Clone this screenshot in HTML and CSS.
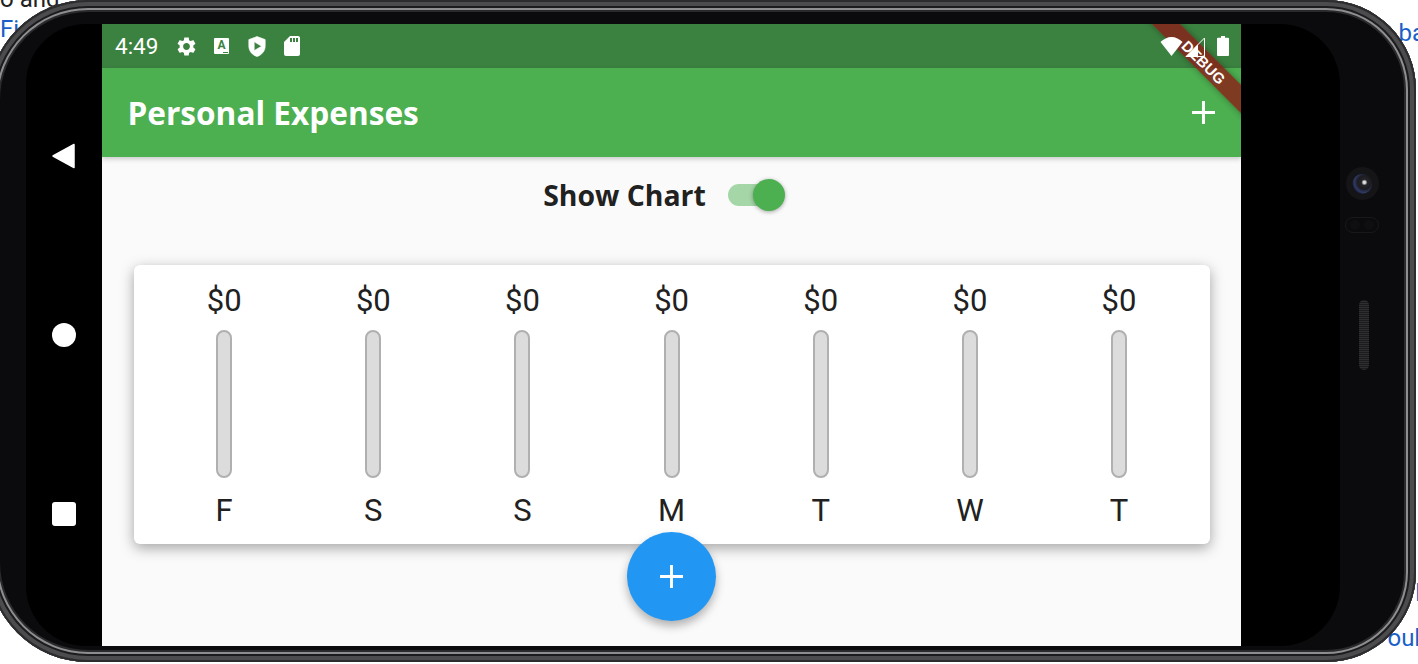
FILE: index.html
```html
<!DOCTYPE html>
<html lang="en">
<head>
    <meta charset="UTF-8">
    <title>Personal Expenses</title>
    <link rel="stylesheet" href="styles.css">
</head>
<body>
    <div class="stage">
        <div class="docs">
            <div class="docs-row docs-top"><span class="docs-black">o and</span></div>
            <div class="docs-row docs-second"><a>Fi</a><a>ba</a></div>
            <div class="docs-row docs-third"><span></span><a>l</a></div>
            <div class="docs-row docs-last"><span></span><a>oub</a></div>
        </div>

        <div class="phone">
            <div class="display">
                <div class="navkeys">
                    <svg class="nav-back" viewBox="0 0 24 26"><path d="M22 1.5 V24.5 L1 13 Z" fill="#fff" stroke="#fff" stroke-width="1.5" stroke-linejoin="round"/></svg>
                    <div class="nav-home"></div>
                    <div class="nav-recent"></div>
                </div>

                <div class="screen">
                    <div class="statusbar">
                        <span class="clock">4:49</span>
                        <svg class="ic ic-gear" viewBox="2 2 20 20"><path fill="#fff" d="M19.14,12.94c0.04-0.3,0.06-0.61,0.06-0.94c0-0.32-0.02-0.64-0.07-0.94l2.03-1.58c0.18-0.14,0.23-0.41,0.12-0.61 l-1.92-3.32c-0.12-0.22-0.37-0.29-0.59-0.22l-2.39,0.96c-0.5-0.38-1.03-0.7-1.62-0.94L14.4,2.81c-0.04-0.24-0.24-0.41-0.48-0.41 h-3.84c-0.24,0-0.43,0.17-0.47,0.41L9.25,5.35C8.66,5.59,8.12,5.92,7.63,6.29L5.24,5.33c-0.22-0.08-0.47,0-0.59,0.22L2.74,8.87 C2.62,9.08,2.66,9.34,2.86,9.48l2.03,1.58C4.84,11.36,4.8,11.69,4.8,12s0.02,0.64,0.07,0.94l-2.03,1.58 c-0.18,0.14-0.23,0.41-0.12,0.61l1.92,3.32c0.12,0.22,0.37,0.29,0.59,0.22l2.39-0.96c0.5,0.38,1.03,0.7,1.62,0.94l0.36,2.54 c0.05,0.24,0.24,0.41,0.48,0.41h3.84c0.24,0,0.44-0.17,0.47-0.41l0.36-2.54c0.59-0.24,1.13-0.56,1.62-0.94l2.39,0.96 c0.22,0.08,0.47,0,0.59-0.22l1.92-3.32c0.12-0.22,0.07-0.47-0.12-0.61L19.14,12.94z M12,15.6c-1.98,0-3.6-1.62-3.6-3.6 s1.62-3.6,3.6-3.6s3.6,1.62,3.6,3.6S13.98,15.6,12,15.6z"/></svg>
                        <span class="ic-a">A</span>
                        <svg class="ic ic-shield" viewBox="0 0 18 21"><path fill="#fff" fill-rule="evenodd" stroke="#fff" stroke-width="0.6" stroke-linejoin="round" d="M9 0.5 L17.2 3.6 V10 C17.2 15 13.8 19 9 20.6 C4.2 19 0.8 15 0.8 10 V3.6 Z M6.2 5.8 V14.6 L13.6 10.2 Z"/></svg>
                        <svg class="ic ic-sd" viewBox="4 2 16 20"><path fill="#fff" d="M18 2h-8L4.02 8 4 20c0 1.1.9 2 2 2h12c1.1 0 2-.9 2-2V4c0-1.1-.9-2-2-2zm-6 6h-2V4h2v4zm3 0h-2V4h2v4zm3 0h-2V4h2v4z"/></svg>
                        <span class="status-gap"></span>
                        <svg class="ic ic-wifi" viewBox="0 0 22 19"><path fill="#fff" d="M11 19 L0 5 C3 2 7 0 11 0 C15 0 19 2 22 5 Z"/></svg>
                        <svg class="ic ic-signal" viewBox="0 0 20 20"><path fill="none" stroke="#fff" stroke-width="1" d="M19.5 1 V19.5 H1 Z"/><path fill="#fff" d="M13 7.5 V20 H0.5 Z"/></svg>
                        <svg class="ic ic-battery" viewBox="0 0 12 20"><path fill="#fff" d="M4 0 H8 V1.8 H11 A1 1 0 0 1 12 2.8 V19 A1 1 0 0 1 11 20 H1 A1 1 0 0 1 0 19 V2.8 A1 1 0 0 1 1 1.8 H4 Z"/></svg>
                    </div>
                    <div class="appbar">
                        <span class="appbar-title">Personal Expenses</span>
                        <svg class="appbar-add" viewBox="0 0 24 24"><path fill="#fff" d="M10.4 0 H13.6 V10.4 H24 V13.6 H13.6 V24 H10.4 V13.6 H0 V10.4 H10.4 Z"/></svg>
                    </div>
                    <div class="content">
                        <div class="toggle-row">
                            <span class="toggle-label">Show Chart</span>
                            <div class="switch"><div class="switch-thumb"></div></div>
                        </div>
                        <div class="chart">
                            <div class="day"><span class="amount">$0</span><div class="bar"></div><span class="letter">F</span></div>
                            <div class="day"><span class="amount">$0</span><div class="bar"></div><span class="letter">S</span></div>
                            <div class="day"><span class="amount">$0</span><div class="bar"></div><span class="letter">S</span></div>
                            <div class="day"><span class="amount">$0</span><div class="bar"></div><span class="letter">M</span></div>
                            <div class="day"><span class="amount">$0</span><div class="bar"></div><span class="letter">T</span></div>
                            <div class="day"><span class="amount">$0</span><div class="bar"></div><span class="letter">W</span></div>
                            <div class="day"><span class="amount">$0</span><div class="bar"></div><span class="letter">T</span></div>
                        </div>
                        <div class="fab">
                            <svg viewBox="0 0 24 24"><path fill="#fff" d="M10.5 0 H13.5 V10.5 H24 V13.5 H13.5 V24 H10.5 V13.5 H0 V10.5 H10.5 Z"/></svg>
                        </div>
                    </div>
                    <div class="ribbon"><span>DEBUG</span></div>
                </div>
            </div>

            <div class="sensors">
                <div class="camera"><div class="lens"></div></div>
                <div class="sensor-pill"><i></i><i></i></div>
                <div class="speaker"></div>
            </div>
        </div>
    </div>
</body>
</html>
```

FILE: styles.css
```css
html, body {
    margin: 0;
    height: 100%;
    background: #fff;
    overflow: hidden;
}
.stage {
    display: grid;
    width: 1418px;
    height: 664px;
    overflow: hidden;
    font-family: 'Roboto', sans-serif;
}
.docs, .phone {
    grid-area: 1 / 1;
}

/* page text behind the phone */
.docs {
    font-family: 'Roboto', 'Liberation Sans', sans-serif;
    font-size: 24px;
    line-height: 24px;
    color: #1a5fc8;
}
.docs-row {
    display: flex;
    justify-content: space-between;
    align-items: flex-start;
}
.docs-top {
    margin-top: -13px;
    color: #222;
}
.docs-second {
    margin-top: 6px;
}
.docs-second a:last-child {
    margin-top: 4px;
    margin-right: -7px;
}
.docs-third {
    margin-top: 536px;
}
.docs-third a {
    margin-right: -3px;
}
.docs-last {
    margin-top: 21px;
}
.docs-last a {
    margin-right: -10px;
}

/* device */
.phone {
    display: flex;
    width: 1428px;
    height: 662px;
    margin-left: -12px;
    padding: 24px 0 16px 38px;
    box-sizing: border-box;
    border-radius: 100px 90px 90px 100px;
    background: #0b0b0d;
    box-shadow:
        inset 0 0 0 2px #2c2c2e,
        inset 0 0 0 6px #4c4c4e,
        inset 0 0 0 8px #1c1c1e,
        inset 0 0 0 10px #8e8e90,
        inset 0 0 0 12px #2a2a2c;
}
.display {
    display: flex;
    width: 1314px;
    height: 622px;
    background: #000;
    border-radius: 60px;
    overflow: hidden;
    flex: none;
}
.navkeys {
    display: flex;
    flex-direction: column;
    align-items: center;
    width: 76px;
    flex: none;
}
.nav-back {
    width: 24px;
    height: 26px;
    margin-top: 119px;
}
.nav-home {
    width: 24px;
    height: 24px;
    margin-top: 154px;
    background: #fff;
    border-radius: 50%;
}
.nav-recent {
    width: 24px;
    height: 24px;
    margin-top: 155px;
    background: #fff;
    border-radius: 3px;
}
.screen {
    position: relative;
    display: flex;
    flex-direction: column;
    width: 1139px;
    flex: none;
    background: #fafafa;
    overflow: hidden;
}

/* status bar */
.statusbar {
    display: flex;
    align-items: center;
    height: 44px;
    padding: 0 12px 0 13px;
    background: #3b8240;
    flex: none;
}
.clock {
    font-size: 22.5px;
    color: #fff;
    width: 62px;
}
.ic {
    display: block;
    flex: none;
    position: relative;
    z-index: 3;
}
.ic-gear {
    width: 19px;
    height: 19px;
}
.ic-a {
    position: relative;
    width: 15px;
    height: 16px;
    margin-left: 18px;
    background: #fff;
    border-radius: 1px;
    color: #3b8240;
    font-size: 12px;
    font-weight: 700;
    line-height: 15px;
    text-align: center;
}
.ic-a::after {
    content: "";
    position: absolute;
    right: 1px;
    bottom: 1px;
    width: 5px;
    height: 1px;
    background: #3b8240;
}
.ic-shield {
    width: 18px;
    height: 21px;
    margin-left: 19px;
}
.ic-sd {
    width: 16px;
    height: 20px;
    margin-left: 18px;
}
.status-gap {
    flex: 1;
}
.ic-wifi {
    width: 23px;
    height: 19px;
}
.ic-signal {
    width: 20px;
    height: 20px;
    margin-left: 2px;
    margin-top: 1px;
}
.ic-battery {
    width: 12px;
    height: 20px;
    margin-left: 12px;
}

/* app bar */
.appbar {
    display: flex;
    align-items: center;
    justify-content: space-between;
    height: 89px;
    padding: 0 26px 0 25.5px;
    background: #4caf50;
    box-shadow: 0 2px 5px rgba(0, 0, 0, 0.2);
    flex: none;
    z-index: 1;
}
.appbar-title {
    font-family: 'Open Sans', sans-serif;
    font-size: 31.6px;
    font-weight: 700;
    color: #fff;
}
.appbar-add {
    width: 23px;
    height: 23px;
}

/* body */
.content {
    position: relative;
    flex: 1;
}
.toggle-row {
    display: flex;
    align-items: center;
    justify-content: center;
    gap: 22px;
    height: 76px;
}
.toggle-label {
    font-family: 'Open Sans', sans-serif;
    font-size: 28.4px;
    font-weight: 700;
    color: #212121;
}
.switch {
    position: relative;
    width: 48px;
    height: 22px;
    margin-right: 24px;
    background: #a5d6a7;
    border-radius: 11px;
}
.switch-thumb {
    position: absolute;
    top: -5px;
    right: -9px;
    width: 32px;
    height: 32px;
    background: #4caf50;
    border-radius: 50%;
    box-shadow: 0 1px 4px rgba(0, 0, 0, 0.35);
}

/* chart card */
.chart {
    display: grid;
    grid-template-columns: repeat(7, 1fr);
    height: 279px;
    margin: 32px 31px 0 32px;
    padding: 0 16.4px 0 15.6px;
    box-sizing: border-box;
    background: #fff;
    border-radius: 6px;
    box-shadow: 0 4px 14px rgba(0, 0, 0, 0.35);
}
.day {
    display: flex;
    flex-direction: column;
    align-items: center;
    color: #212121;
}
.amount {
    height: 65px;
    font-size: 31px;
    line-height: 71px;
}
.bar {
    width: 16px;
    height: 148px;
    box-sizing: border-box;
    background: #dcdcdc;
    border: 2px solid #b0b0b0;
    border-radius: 8px;
}
.letter {
    font-size: 31px;
    line-height: 65px;
}
.fab {
    position: absolute;
    left: 525px;
    bottom: 25px;
    display: flex;
    align-items: center;
    justify-content: center;
    width: 89px;
    height: 89px;
    background: #2196f3;
    border-radius: 50%;
    box-shadow: 0 5px 10px rgba(0, 0, 0, 0.3);
}
.fab svg {
    width: 23px;
    height: 23px;
}

/* debug banner */
.ribbon {
    position: absolute;
    top: 28px;
    left: 1032px;
    width: 140px;
    height: 20px;
    background: rgba(140, 29, 22, 0.8);
    transform: rotate(45deg);
    box-shadow: 0 0 6px rgba(0, 0, 0, 0.35);
    display: flex;
    align-items: center;
    justify-content: center;
    z-index: 2;
}
.ribbon span {
    font-family: 'Liberation Sans', sans-serif;
    font-size: 15px;
    font-weight: 700;
    color: #fff;
}

/* right hand side of the phone */
.sensors {
    display: flex;
    flex-direction: column;
    align-items: center;
    width: 44px;
    flex: none;
}
.camera {
    display: flex;
    align-items: center;
    justify-content: center;
    width: 33px;
    height: 33px;
    margin-top: 143px;
    background: #151517;
    border-radius: 50%;
}
.lens {
    width: 20px;
    height: 20px;
    border-radius: 50%;
    background: radial-gradient(circle at 62% 42%, #ddd 0 7%, #26262a 18%, #1c1c20 40%, #2f3a66 60%, #060608 78%);
}
.sensor-pill {
    display: flex;
    justify-content: space-between;
    width: 34px;
    height: 16px;
    margin-top: 17px;
    padding: 2px 4px;
    box-sizing: border-box;
    border: 1px solid #18181a;
    border-radius: 8px;
}
.sensor-pill i {
    display: block;
    width: 10px;
    height: 10px;
    background: #0f0f11;
    border-radius: 50%;
}
.speaker {
    width: 10px;
    height: 70px;
    margin-top: 67px;
    margin-left: 4px;
    background: repeating-linear-gradient(0deg, #2e2e30 0 1px, #1c1c1e 1px 2px);
    border-radius: 5px;
}
```
